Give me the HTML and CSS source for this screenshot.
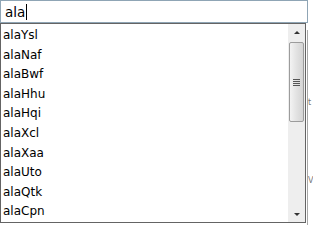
FILE: index.html
```html
<!DOCTYPE html>
<html>
<head>
<meta charset="utf-8">
<link rel="stylesheet" href="styles.css">
</head>
<body>
<div class="page">
  <div class="search"><span class="value">ala</span><span class="caret"></span></div>
  <div class="behind">
    <span class="frag f1">t</span>
    <span class="frag f2">V</span>
  </div>
  <div class="dropdown">
    <ul class="list">
      <li>alaYsl</li>
      <li>alaNaf</li>
      <li>alaBwf</li>
      <li>alaHhu</li>
      <li>alaHqi</li>
      <li>alaXcl</li>
      <li>alaXaa</li>
      <li>alaUto</li>
      <li>alaQtk</li>
      <li>alaCpn</li>
    </ul>
    <div class="scrollbar">
      <div class="arrow up"></div>
      <div class="track">
        <div class="thumb"><span class="grip"></span></div>
      </div>
      <div class="arrow down"></div>
    </div>
  </div>
</div>
</body>
</html>
```
FILE: styles.css
```css
html, body {
  margin: 0;
  padding: 0;
  background: #ffffff;
}
.page {
  position: relative;
  width: 313px;
  height: 225px;
  overflow: hidden;
  font-family: "DejaVu Sans", Tahoma, sans-serif;
}
.search {
  box-sizing: border-box;
  width: 308px;
  height: 23px;
  border: 1px solid #8fa5b5;
  display: flex;
  align-items: center;
  padding-left: 4px;
  font-size: 13.5px;
  color: #000;
}
.caret {
  display: inline-block;
  width: 1px;
  height: 16px;
  background: #000;
  margin-left: 1px;
}
.behind {
  position: absolute;
  left: 307px;
  top: 30px;
  width: 6px;
  height: 195px;
  border-left: 1px solid #a8a8a8;
}
.frag {
  position: absolute;
  left: 0;
  font-size: 8px;
  color: #777;
}
.f1 { top: 68px; }
.f2 { top: 146px; }
.dropdown {
  position: absolute;
  left: 0;
  top: 23px;
  box-sizing: border-box;
  width: 306px;
  height: 200px;
  border: 1px solid #646464;
  background: #fff;
  display: flex;
}
.list {
  list-style: none;
  margin: 0;
  padding: 2px 0 0 0;
  flex: 1;
  font-family: "DejaVu Sans", Tahoma, sans-serif;
  font-size: 12px;
  color: #000;
}
.list li {
  height: 19.6px;
  line-height: 19.6px;
  padding-left: 2px;
}
.scrollbar {
  width: 17px;
  display: flex;
  flex-direction: column;
  background: #eeeeee;
}
.arrow {
  height: 17px;
  position: relative;
}
.arrow::after {
  content: "";
  position: absolute;
  left: 6px;
  width: 0;
  height: 0;
  border-left: 3px solid transparent;
  border-right: 3px solid transparent;
}
.up::after {
  top: 7px;
  border-bottom: 3px solid #333;
}
.down::after {
  top: 8px;
  border-top: 3px solid #333;
}
.track {
  flex: 1;
}
.thumb {
  box-sizing: border-box;
  margin: 1px 1px 0;
  height: 80px;
  border: 1px solid #9c9c9c;
  border-radius: 2px;
  background: linear-gradient(to right, #f3f3f3, #e2e2e2 50%, #d4d4d4);
  display: flex;
  align-items: center;
  justify-content: center;
}
.grip {
  width: 7px;
  height: 7px;
  background: repeating-linear-gradient(to bottom, #555 0, #555 1px, transparent 1px, transparent 2px);
}
```
